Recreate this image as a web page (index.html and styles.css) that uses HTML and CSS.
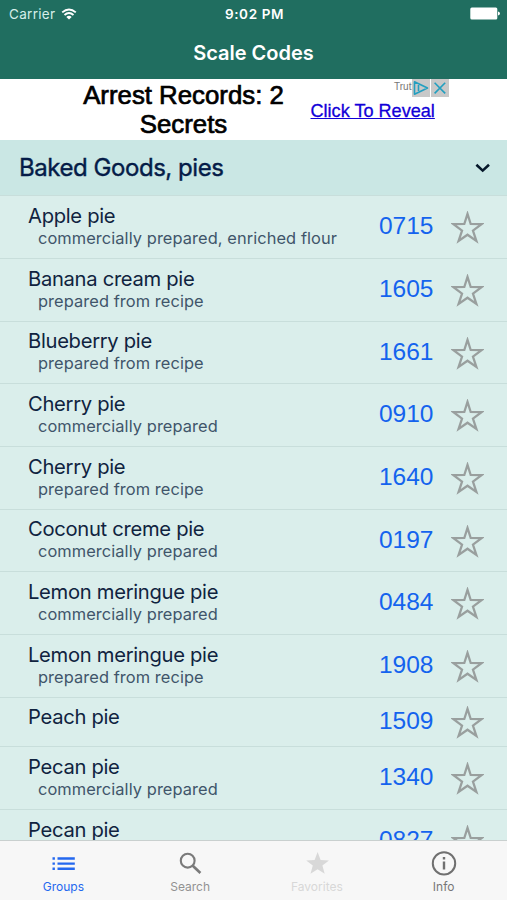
FILE: index.html
```html
<!DOCTYPE html>
<html lang="en">
<head>
  <meta charset="UTF-8">
  <meta name="viewport" content="width=device-width, initial-scale=1.0">
  <title>Scale Codes</title>
  <link rel="stylesheet" href="styles.css">
</head>
<body>
  <svg class="sprite" aria-hidden="true">
    <symbol id="star" viewBox="0 0 32 32">
      <path d="M16 2.8 L19.1 12.6 L29.6 12.8 L21.3 19 L24.6 29 L16 23 L7.4 29 L10.7 19 L2.4 12.8 L12.9 12.6 Z" fill="none" stroke="#999f9e" stroke-width="2.2" stroke-miterlimit="10" />
    </symbol>
  </svg>

  <header class="top">
    <div class="status-bar">
      <div class="carrier">
        <span>Carrier</span>
        <svg width="16" height="12" viewBox="0 0 16 12">
          <path d="M1.2 4.4 Q8 -1.6 14.8 4.4 M3.5 7 Q8 3 12.5 7" fill="none" stroke="#fff" stroke-width="1.9" />
          <path d="M8 11.6 L5.3 8.9 Q8 6.7 10.7 8.9 Z" fill="#fff" />
        </svg>
      </div>
      <div class="time">9:02 PM</div>
      <div class="battery">
        <svg width="30" height="13" viewBox="0 0 30 13">
          <rect x="0.3" y="0.5" width="27" height="12" rx="1.5" fill="#fff" />
          <path d="M28 4.5 Q30 5 30 6.5 Q30 8 28 8.5 Z" fill="#fff" />
        </svg>
      </div>
    </div>
    <h1>Scale Codes</h1>
  </header>

  <div class="ad">
    <div class="ad-title">Arrest Records: 2<br>Secrets</div>
    <a class="ad-link" href="#">Click To Reveal</a>
    <span class="ad-brand">Truthfin</span>
    <div class="ad-badge">
      <svg width="18" height="18" viewBox="0 0 18 18">
        <path d="M2.5 2.8 V15.2 L15.5 9 Z M6.5 6 V12" fill="none" stroke="#229fc0" stroke-width="1.6" stroke-linejoin="round" />
      </svg>
      <svg width="18" height="18" viewBox="0 0 18 18">
        <path d="M3.6 3.8 L14.2 14.4 M14.2 3.8 L3.6 14.4" fill="none" stroke="#229fc0" stroke-width="1.6" />
      </svg>
    </div>
  </div>

  <main class="list">
    <div class="group">
      <h2>Baked Goods, pies</h2>
      <svg width="16" height="10" viewBox="0 0 16 10">
        <path d="M1.4 1.8 L7.7 7.6 L14 1.8" fill="none" stroke="#05182a" stroke-width="2.6" />
      </svg>
    </div>
    <div class="row">
      <div class="item"><div class="name">Apple pie</div><div class="note">commercially prepared, enriched flour</div></div>
      <div class="code">0715</div>
      <svg class="star"><use href="#star" /></svg>
    </div>
    <div class="row">
      <div class="item"><div class="name">Banana cream pie</div><div class="note">prepared from recipe</div></div>
      <div class="code">1605</div>
      <svg class="star"><use href="#star" /></svg>
    </div>
    <div class="row">
      <div class="item"><div class="name">Blueberry pie</div><div class="note">prepared from recipe</div></div>
      <div class="code">1661</div>
      <svg class="star"><use href="#star" /></svg>
    </div>
    <div class="row">
      <div class="item"><div class="name">Cherry pie</div><div class="note">commercially prepared</div></div>
      <div class="code">0910</div>
      <svg class="star"><use href="#star" /></svg>
    </div>
    <div class="row">
      <div class="item"><div class="name">Cherry pie</div><div class="note">prepared from recipe</div></div>
      <div class="code">1640</div>
      <svg class="star"><use href="#star" /></svg>
    </div>
    <div class="row">
      <div class="item"><div class="name">Coconut creme pie</div><div class="note">commercially prepared</div></div>
      <div class="code">0197</div>
      <svg class="star"><use href="#star" /></svg>
    </div>
    <div class="row">
      <div class="item"><div class="name">Lemon meringue pie</div><div class="note">commercially prepared</div></div>
      <div class="code">0484</div>
      <svg class="star"><use href="#star" /></svg>
    </div>
    <div class="row">
      <div class="item"><div class="name">Lemon meringue pie</div><div class="note">prepared from recipe</div></div>
      <div class="code">1908</div>
      <svg class="star"><use href="#star" /></svg>
    </div>
    <div class="row short">
      <div class="item"><div class="name">Peach pie</div></div>
      <div class="code">1509</div>
      <svg class="star"><use href="#star" /></svg>
    </div>
    <div class="row">
      <div class="item"><div class="name">Pecan pie</div><div class="note">commercially prepared</div></div>
      <div class="code">1340</div>
      <svg class="star"><use href="#star" /></svg>
    </div>
    <div class="row">
      <div class="item"><div class="name">Pecan pie</div></div>
      <div class="code">0827</div>
      <svg class="star"><use href="#star" /></svg>
    </div>
  </main>

  <nav class="tabs">
    <a class="tab active">
      <svg width="28" height="28" viewBox="0 0 28 28">
        <path d="M3.5 8.5 H5.9 M8.5 8.5 H25.8 M3.5 13.6 H5.9 M8.5 13.6 H25.8 M3.5 18.8 H5.9 M8.5 18.8 H25.8" stroke="currentColor" stroke-width="2.4" />
      </svg>
      <span>Groups</span>
    </a>
    <a class="tab">
      <svg width="28" height="28" viewBox="0 0 28 28">
        <circle cx="11.7" cy="10.7" r="6.9" fill="none" stroke="#7a7a7a" stroke-width="2.1" />
        <path d="M16.5 15.4 L24.4 22.9" stroke="#7a7a7a" stroke-width="2.7" />
      </svg>
      <span>Search</span>
    </a>
    <a class="tab disabled">
      <svg width="28" height="28" viewBox="0 0 28 28">
        <path d="M14.6 2 L17.6 10 L26 10.4 L19.4 15.6 L21.7 23.8 L14.6 19.2 L7.5 23.8 L9.8 15.6 L3.2 10.4 L11.6 10 Z" fill="currentColor" />
      </svg>
      <span>Favorites</span>
    </a>
    <a class="tab info">
      <svg width="28" height="28" viewBox="0 0 28 28">
        <circle cx="14" cy="13.4" r="11.2" fill="none" stroke="#707070" stroke-width="2" />
        <path d="M14 7.1 V9.6 M14 11.4 V19.6" stroke="#707070" stroke-width="2.4" />
      </svg>
      <span>Info</span>
    </a>
  </nav>
</body>
</html>
```
FILE: styles.css
```css
* {
  box-sizing: border-box;
}

body {
  font-family: Inter, "Liberation Sans", sans-serif;
  margin: 0;
  height: 900px;
  display: flex;
  flex-direction: column;
  overflow: hidden;
  background: #fff;
}

.sprite {
  display: none;
}

.top {
  height: 79px;
  flex: none;
  background: #206e60;
  color: #fff;
}

.status-bar {
  display: grid;
  grid-template-columns: 1fr auto 1fr;
  align-items: center;
  height: 27px;
  padding: 0 7px 0 9px;
  font-size: 13.5px;
}

.carrier {
  display: flex;
  align-items: center;
  gap: 6px;
  color: #d5efe9;
  letter-spacing: 0.3px;
}

.time {
  font-weight: 600;
  letter-spacing: 0.6px;
}

.battery {
  display: flex;
  justify-content: flex-end;
}

.top h1 {
  margin: 13px 0 0;
  font-size: 20px;
  line-height: 26px;
  font-weight: 600;
  text-align: center;
}

.ad {
  position: relative;
  display: flex;
  height: 61px;
  flex: none;
  padding-left: 83px;
  font-family: "Liberation Sans", Arial, sans-serif;
  background: #fff;
}

.ad-title {
  width: 201px;
  padding-top: 2px;
  font-size: 25.8px;
  line-height: 29px;
  text-align: center;
  white-space: nowrap;
  color: #000;
  -webkit-text-stroke: 0.7px #000;
}

.ad-link {
  margin: 21px 0 0 26.5px;
  font-size: 18.1px;
  line-height: 22px;
  color: #1200d8;
  -webkit-text-stroke: 0.3px #1200d8;
}

/* ad choices overlay covers the end of the brand name */
.ad-brand {
  position: absolute;
  top: 2px;
  left: 394px;
  font-size: 10px;
  color: #777;
}

.ad-badge {
  position: absolute;
  top: 0;
  left: 412px;
  display: flex;
  gap: 1px;
}

.ad-badge svg {
  background: #c8c8c8;
}

.list {
  flex: 1;
  min-height: 0;
  overflow: hidden;
  background: #daeeeb;
}

.group {
  display: flex;
  align-items: center;
  justify-content: space-between;
  height: 55.2px;
  padding: 0 16px 0 19px;
  background: #cae7e4;
}

.group h2 {
  margin: 0;
  font-size: 24px;
  font-weight: 400;
  letter-spacing: -0.45px;
  color: #051c48;
  -webkit-text-stroke: 0.4px #051c48;
}

.row {
  display: flex;
  height: 62.7px;
  padding-right: 23px;
  border-top: 1px solid #c8dedb;
}

.row.short {
  height: 49.5px;
}

.item {
  flex: 1;
  padding: 7.8px 0 0 28px;
}

.name {
  font-size: 20.2px;
  line-height: 24px;
  letter-spacing: -0.3px;
  color: #10233f;
}

.note {
  padding-left: 10px;
  font-size: 16.4px;
  line-height: 20px;
  letter-spacing: 0.08px;
  color: #40556a;
}

.code {
  margin-right: 17.5px;
  font-family: "Liberation Sans", Arial, sans-serif;
  font-size: 24.5px;
  line-height: 60px;
  color: #1463ee;
}

.star {
  width: 33px;
  height: 33px;
  margin-top: 15px;
}

.short .code {
  line-height: 46px;
}

.short .star {
  margin-top: 8.5px;
}

.tabs {
  display: grid;
  grid-template-columns: repeat(4, 1fr);
  height: 60px;
  flex: none;
  border-top: 1px solid #c9d0cf;
  background: #f7f7f7;
}

.tab {
  display: flex;
  flex-direction: column;
  align-items: center;
  padding-top: 9px;
  font-size: 12px;
  line-height: 17px;
  color: #929292;
}

.tab.active {
  color: #2468ef;
}

.tab.disabled {
  color: #d8d8d8;
}

.tab.info {
  color: #777;
}
```
